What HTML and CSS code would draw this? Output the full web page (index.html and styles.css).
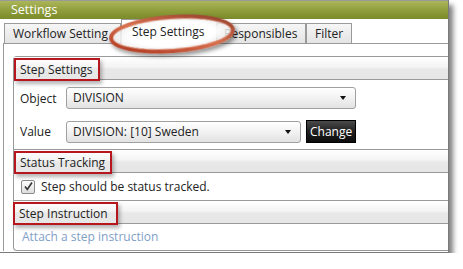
FILE: index.html
```html
<!DOCTYPE html>
<html>
<head>
    <title>Settings</title>
    <link rel="stylesheet" href="styles.css">
</head>
<body>
    <div class="window">
        <div class="titlebar">Settings</div>

        <div class="tabs">
            <div class="tab tab-first">Workflow Setting</div>
            <div class="tab tab-active"><span class="tab-label">Step Settings</span></div>
            <div class="tab tab-resp">Responsibles</div>
            <div class="tab">Filter</div>
        </div>

        <!-- anotación: elipse roja alrededor de la pestaña activa -->
        <svg class="callout" width="150" height="50" viewBox="0 0 150 50">
            <defs>
                <linearGradient id="ring" x1="0" y1="1" x2="1" y2="0">
                    <stop offset="0" stop-color="#a8321c" />
                    <stop offset="0.5" stop-color="#d8704e" />
                    <stop offset="1" stop-color="#8c3a2a" />
                </linearGradient>
                <radialGradient id="glow" cx="0.5" cy="0.5" r="0.5">
                    <stop offset="0.7" stop-color="#fff" stop-opacity="1" />
                    <stop offset="1" stop-color="#fff" stop-opacity="0.6" />
                </radialGradient>
                <filter id="shadow" x="-20%" y="-40%" width="140%" height="180%">
                    <feDropShadow dx="2" dy="3" stdDeviation="2" flood-color="#000" flood-opacity="0.45" />
                </filter>
            </defs>
            <g transform="rotate(-4 69 23)" filter="url(#shadow)">
                <ellipse cx="69" cy="23" rx="61" ry="17" fill="url(#glow)" stroke="url(#ring)" stroke-width="4" />
                <ellipse cx="69" cy="23" rx="59" ry="15" fill="none" stroke="#e9a48c" stroke-width="1" opacity="0.7" />
            </g>
        </svg>

        <div class="panel">
            <div class="section">
                <div class="section-header"><span class="marked">Step Settings</span></div>
                <div class="section-body">
                    <div class="form-row">
                        <label>Object</label>
                        <div class="select select-wide">DIVISION<span class="arrow"></span></div>
                    </div>
                    <div class="form-row">
                        <label>Value</label>
                        <div class="select select-short">DIVISION: [10] Sweden<span class="arrow"></span></div>
                        <button class="change-button">Change</button>
                    </div>
                </div>

                <div class="section-header"><span class="marked">Status Tracking</span></div>
                <div class="section-body check-body">
                    <span class="checkbox">
                        <svg width="11" height="11" viewBox="0 0 11 11">
                            <path d="M2 5.5 L4.3 8.5 L9 1.5" fill="none" stroke="#333" stroke-width="1.6" />
                        </svg>
                    </span>
                    <span>Step should be status tracked.</span>
                </div>

                <div class="section-header"><span class="marked marked-wide">Step Instruction</span></div>
                <div class="section-body link-body">
                    <a href="#" class="attach-link">Attach a step instruction</a>
                </div>
            </div>
        </div>
    </div>
</body>
</html>
```

FILE: styles.css
```css
body {
    font-family: "Open Sans", Arial, sans-serif;
    font-size: 12px;
    color: #222;
    margin: 0;
    padding: 0;
    background-color: #fff;
}

.window {
    position: relative;
    width: 448px;
    height: 252px;
    border-right: 1px solid #7a7a7a;
    border-bottom: 1px solid #7a7a7a;
    box-shadow: 4px 5px 5px rgba(0, 0, 0, 0.5);
    background-color: #fff;
}

/* Barra de título */
.titlebar {
    height: 18px;
    border-top: 1px solid #9a9a9a;
    background: linear-gradient(#abb65a, #8e9c3a 55%, #7b8a2a);
    color: #fff;
    font-size: 12.5px;
    line-height: 18px;
    padding-left: 11px;
}

/* Pestañas */
.tabs {
    display: flex;
    align-items: flex-end;
    height: 24px;
    padding-left: 4px;
}

.tab {
    box-sizing: border-box;
    height: 20px;
    line-height: 19px;
    padding: 0 8px;
    border: 1px solid #9a9a9a;
    border-bottom: none;
    background: linear-gradient(#f6f6f6, #e4e4e4);
    white-space: nowrap;
}

.tab-first {
    width: 117px;
}

.tab-active {
    position: relative;
    width: 96px;
    height: 25px;
    line-height: 24px;
    margin-bottom: -1px;
    background: #fff;
    padding: 0 10px;
}

.tab-resp {
    width: 89px;
    padding-left: 6px;
}

.tab-label {
    position: relative;
    z-index: 2;
}

.callout {
    position: absolute;
    left: 103px;
    top: 11px;
    z-index: 1;
}

/* Panel */
.panel {
    margin-left: 3px;
    border-left: 1px solid #9a9a9a;
    border-top: 1px solid #9a9a9a;
    padding: 12px 0 0 9px;
    height: 195px;
}

.section {
    border-left: 1px solid #9a9a9a;
    border-top: 1px solid #9a9a9a;
    border-bottom: 1px solid #9a9a9a;
    border-radius: 4px 0 0 4px;
}

.section-header {
    height: 22px;
    background: linear-gradient(#fff, #f4f4f4 45%, #e8e8e8 55%, #e6e6e6);
    border-bottom: 1px solid #9a9a9a;
}

.section-body + .section-header {
    border-top: 1px solid #9a9a9a;
}

.marked {
    display: inline-block;
    position: relative;
    margin-top: 1px;
    height: 19px;
    line-height: 19px;
    padding: 0 5px 0 4px;
    border: 2px solid #b8161f;
    box-shadow: 2px 3px 4px rgba(0, 0, 0, 0.3);
}

.marked-wide {
    margin-left: -1px;
    padding-right: 8px;
}

.section-body {
    padding: 7px 0 6px 6px;
}

.form-row {
    display: flex;
    align-items: center;
    margin-bottom: 11px;
}

.form-row:last-child {
    margin-bottom: 0;
}

.form-row label {
    width: 46px;
}

.select {
    position: relative;
    box-sizing: border-box;
    height: 22px;
    line-height: 20px;
    padding-left: 6px;
    border: 1px solid #a0a0a0;
    border-radius: 3px;
    background: linear-gradient(#fff, #f2f2f2 50%, #e2e2e2);
}

.select-wide {
    width: 290px;
}

.select-short {
    width: 235px;
}

.arrow {
    position: absolute;
    right: 9px;
    top: 8px;
    border-left: 3.5px solid transparent;
    border-right: 3.5px solid transparent;
    border-top: 4px solid #111;
}

.change-button {
    margin-left: 5px;
    height: 23px;
    padding: 0 3px;
    font-family: "Open Sans", Arial, sans-serif;
    font-size: 12px;
    color: #fff;
    border: 1px solid #000;
    background: linear-gradient(#4a4a4a, #202020 50%, #0c0c0c);
    cursor: pointer;
}

.check-body {
    display: flex;
    align-items: center;
    gap: 6px;
    height: 15px;
    padding: 6px 0 6px 7px;
}

.checkbox {
    display: inline-flex;
    align-items: center;
    justify-content: center;
    width: 12px;
    height: 12px;
    border: 1px solid #8a8a8a;
    border-radius: 2px;
    background: linear-gradient(#fff, #dcdcdc);
}

.link-body {
    height: 26px;
    line-height: 26px;
    padding: 0 0 0 8px;
}

.attach-link {
    color: #7fa0c8;
    text-decoration: none;
}
```
